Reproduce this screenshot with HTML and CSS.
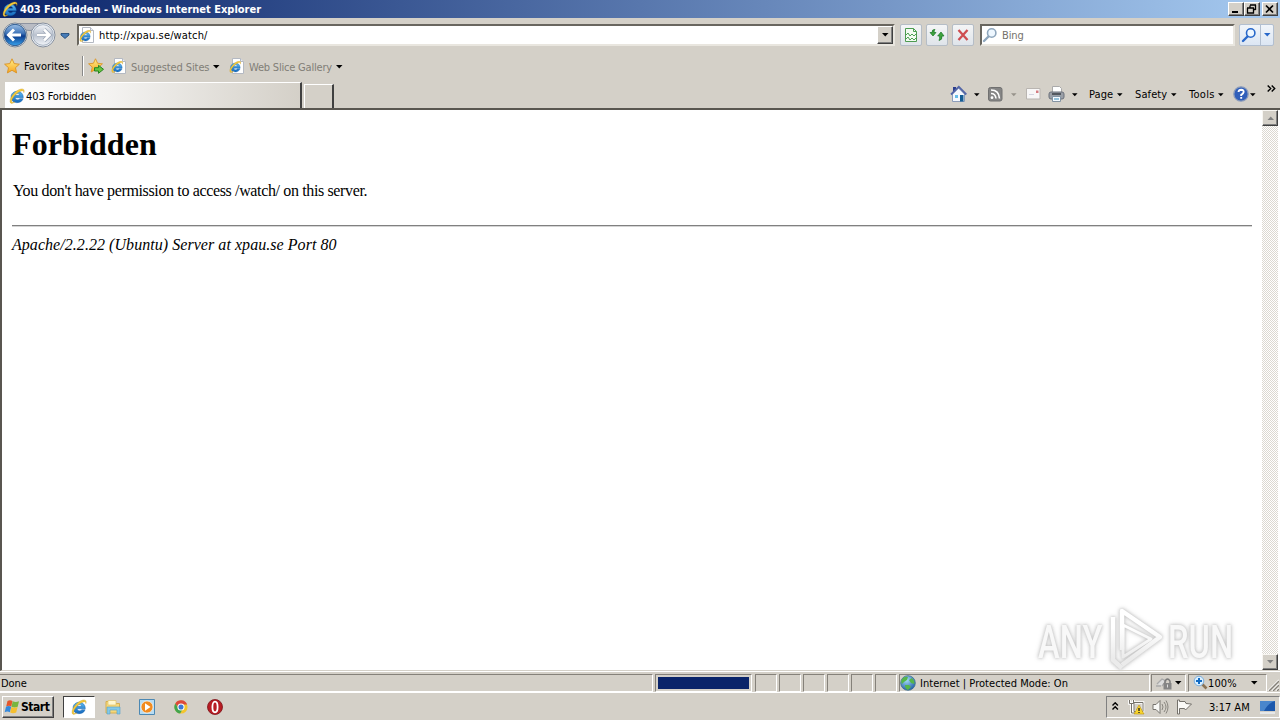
FILE: index.html
```html
<!DOCTYPE html>
<html lang="en">
<head>
<meta charset="utf-8">
<title>403 Forbidden - Windows Internet Explorer</title>
<link rel="stylesheet" href="styles.css">
</head>
<body>
<svg class="defs" width="0" height="0">
  <defs>
    <linearGradient id="blue" x1="0" y1="0" x2="0" y2="1"><stop offset="0" stop-color="#9cc0e6"/><stop offset=".42" stop-color="#3f74b8"/><stop offset=".55" stop-color="#0b3b8c"/><stop offset="1" stop-color="#3aa4ee"/></linearGradient>
    <linearGradient id="pale" x1="0" y1="0" x2="0" y2="1"><stop offset="0" stop-color="#f4f6fa"/><stop offset=".5" stop-color="#b9c1ce"/><stop offset="1" stop-color="#f2f5fa"/></linearGradient>
    <linearGradient id="gold" x1="0" y1="0" x2="0" y2="1"><stop offset="0" stop-color="#fff08a"/><stop offset="1" stop-color="#f8a51e"/></linearGradient>
    <radialGradient id="globe" cx=".4" cy=".3" r=".8"><stop offset="0" stop-color="#a5dcf8"/><stop offset="1" stop-color="#15539e"/></radialGradient>
    <linearGradient id="eblue" x1="0" y1="0" x2="0" y2="1"><stop offset="0" stop-color="#5cb8f0"/><stop offset="1" stop-color="#1468bd"/></linearGradient>
    <linearGradient id="mark" gradientUnits="userSpaceOnUse" x1="0" y1="20" x2="0" y2="50"><stop offset="0" stop-color="#fff"/><stop offset="1" stop-color="#ebebeb"/></linearGradient>
    <symbol id="ie" viewBox="0 0 16 16">
      <path d="M14.300 9.800H6.200c.2 2.300 3.600 2.700 4.500.9h3.400C12.600 16.200 2.200 16.300 2 9 2 1.500 14.600 1 14.300 9.800zM6.200 7.300h4.500c-.4-2.300-4.100-2.300-4.500 0z" fill="url(#eblue)" stroke="#0b58a5" stroke-width=".4"/>
      <path d="M1.600 15C-1 12 5.500 2.200 12 1c3-.5 3.700 1.300 2.800 3.700.1-2.100-1-2.500-3.200-1.400C6.500 5.300 2 11.500 2.800 14c.6.800 2 .2 3.200-.3C4.300 15.200 2.500 16 1.600 15z" fill="#f5ca3c" stroke="#b98c14" stroke-width=".3"/>
    </symbol>
    <symbol id="iepage" viewBox="0 0 16 16">
      <path d="M3.500.5h8l3 3v12h-11z" fill="#fff" stroke="#b4b9c2"/><path d="M11.500.5v3h3" fill="#e8edf5" stroke="#b4b9c2"/>
      <svg x="0" y="2.500" width="12.500" height="12.500"><use href="#ie"/></svg>
    </symbol>
    <symbol id="star" viewBox="0 0 16 16"><path d="M8 .8l2.200 4.800 5.200.6-3.900 3.500 1.100 5.200L8 12.300l-4.600 2.600 1.100-5.200L.6 6.200l5.200-.6z" fill="url(#gold)" stroke="#d99122" stroke-width=".9"/></symbol>
    <symbol id="down" viewBox="0 0 7 4"><path d="M0 0h6.500L3.250 3.500z" fill="currentColor"/></symbol>
    <symbol id="lens" viewBox="0 0 16 16"><path d="M6.500 9.500L2 14" stroke="currentColor" stroke-width="2.400" stroke-linecap="round"/><circle cx="9.700" cy="6" r="4.200" fill="#eef7ff" stroke="currentColor" stroke-width="1.600"/></symbol>
  </defs>
</svg>

<header class="titlebar">
  <svg class="i16"><use href="#ie"/></svg>
  <span class="title">403 Forbidden - Windows Internet Explorer</span>
  <div class="caption">
    <span class="cap"><svg width="12" height="10"><path d="M2 8h6" stroke="#000" stroke-width="2"/></svg></span>
    <span class="cap"><svg width="12" height="10"><path d="M4 1h6M4 1.500v2M9.500 1v5M7.500 5.500h2M1.500 4v5h6V4M1 4h7" fill="none" stroke="#000" stroke-width="1.300"/></svg></span>
    <span class="cap close"><svg width="12" height="10"><path d="M2 1.500l7 7M9 1.500l-7 7" stroke="#000" stroke-width="1.700"/></svg></span>
  </div>
</header>

<nav class="address-row">
  <svg class="travel" viewBox="0 0 56 28">
    <path d="M12 2.500h28v4q-12 6-28 0z" fill="#b9bcc4" stroke="#8d93a0"/>
    <circle cx="12" cy="14" r="12" fill="#e9edf3" stroke="#7b8797"/><circle cx="12" cy="14" r="10.700" fill="url(#blue)" stroke="#315d91"/>
    <path d="M6 14h12M11 8.500L5.500 14l5.500 5.500" fill="none" stroke="#fff" stroke-width="3"/>
    <circle cx="40" cy="14" r="12" fill="#edf1f6" stroke="#858e9d"/><circle cx="40" cy="14" r="10.300" fill="url(#pale)" stroke="#a8b3c2"/>
    <path d="M34 14h12M41 8.500l5.500 5.500-5.500 5.500" fill="none" stroke="#9aa5b5" stroke-width="4"/><path d="M34 14h12M41 8.500l5.500 5.500-5.500 5.500" fill="none" stroke="#fff" stroke-width="2.600"/>
  </svg>
  <svg class="recent" viewBox="0 0 10 6"><path d="M1 .5h8v1.500L5 5.500 1 2z" fill="#477cb7" stroke="#174172" stroke-width=".8"/></svg>
  <div class="field url">
    <svg class="i16"><use href="#iepage"/></svg>
    <span class="url-text">http://xpau.se/watch/</span>
    <span class="combo"><svg class="down"><use href="#down"/></svg></span>
  </div>
  <span class="tool"><svg width="16" height="16"><path d="M2.500 1.500h8l3 3v10h-11z" fill="#f3fbf2" stroke="#4d9b51"/><path d="M10.500 1.500v3h3M3 8l2-2 2 3 2-2 2 2 2-2M3 12l2-2 2 3 2-2 2 2 2-2" fill="none" stroke="#4ba152"/></svg></span>
  <span class="tool"><svg width="16" height="16"><path d="M6 2.500q-3-.5-3 3H1L4 9l3-3.500H5q0-2 1-3zM10 13.500q3.500-.5 3-4.500h2L12 5 8.700 9h2q0 3-.7 4.500z" fill="#3fa33e" stroke="#197525" stroke-width=".7"/></svg></span>
  <span class="tool"><svg width="16" height="16"><path d="M3.500 3l9 10M12.500 3l-9 10" stroke="#ce4c50" stroke-width="2.300"/></svg></span>
  <div class="field search"><svg class="i16"><use href="#lens"/></svg><span>Bing</span></div>
  <div class="go"><svg class="i16"><use href="#lens"/></svg><i></i><svg class="down"><use href="#down"/></svg></div>
</nav>

<nav class="favorites">
  <svg class="i16"><use href="#star"/></svg>
  <span class="fav-label">Favorites</span>
  <i class="divider"></i>
  <svg class="i16 add" viewBox="0 0 16 16"><use href="#star" width="15" height="15"/><path d="M6.500 9.700h4V7.300l5 4-5 4V13h-4z" fill="#67c442" stroke="#26851f"/></svg>
  <svg class="i16 page"><use href="#iepage"/></svg><span class="suggested">Suggested Sites</span><svg class="down"><use href="#down"/></svg>
  <svg class="i16 page slice"><use href="#iepage"/></svg><span class="gallery">Web Slice Gallery</span><svg class="down"><use href="#down"/></svg>
</nav>

<div class="tabs">
  <div class="tab"><svg class="i16"><use href="#ie"/></svg><span>403 Forbidden</span></div>
  <div class="newtab"></div>
  <div class="commands">
    <span class="slot home"><svg width="18" height="18"><path d="M3 2h3v5H3z" fill="#2b3d8d"/><path d="M2.500 9v7.500h12V9L8.500 3z" fill="#f5f9ff" stroke="#8c9dba"/><path d="M1 9.500L8.800 1.800 16.300 9.500" fill="none" stroke="#5366a7" stroke-width="1.800"/><path d="M5 10h3v3H5z" fill="#67bee9"/><path d="M10 10h3.500v6.500H10z" fill="#155d94"/></svg></span>
    <span class="slot arr1"><svg class="down"><use href="#down"/></svg></span>
    <span class="slot rss"><svg width="15" height="15"><rect x=".5" y=".5" width="13.500" height="13.500" rx="2" fill="#858585" stroke="#707070"/><path d="M3 3q8 0 8.500 8.500M3 6.500q4.500 0 5 5" fill="none" stroke="#fff" stroke-width="1.600"/><circle cx="4" cy="10.700" r="1.400" fill="#fff"/></svg></span>
    <span class="slot arr2"><svg class="down"><use href="#down"/></svg></span>
    <span class="slot mail"><svg width="15" height="12"><path d="M.5.500h13.500v10.500H.5z" fill="#f8f7f7" stroke="#b9b5b1"/><path d="M10 2.500h2.500V5H10z" fill="#d47b80"/><path d="M3 6.500h5" stroke="#d3d3df"/></svg></span>
    <span class="slot printer"><svg width="18" height="18"><path d="M4.500 1.500h7l2 2V8h-9z" fill="#fff" stroke="#aaa"/><rect x="1" y="7" width="15" height="7" rx="2" fill="#9a9fa7" stroke="#6b717b"/><path d="M4 9h9" stroke="#41464e" stroke-width="1.600"/><path d="M4.500 11.500h8v5h-8z" fill="#f4faff" stroke="#8393a2"/><path d="M6 14h5" stroke="#398bb9"/></svg></span>
    <span class="slot arr3"><svg class="down"><use href="#down"/></svg></span>
    <span class="slot label cpage">Page</span><span class="slot arr4"><svg class="down"><use href="#down"/></svg></span>
    <span class="slot label safety">Safety</span><span class="slot arr5"><svg class="down"><use href="#down"/></svg></span>
    <span class="slot label tools">Tools</span><span class="slot arr6"><svg class="down"><use href="#down"/></svg></span>
    <span class="slot help"><svg width="16" height="16"><circle cx="8" cy="8" r="7.200" fill="#305fba" stroke="#8c9cba" stroke-width="1.300"/><path d="M5.500 6q.3-2.300 2.700-2.300Q11 3.800 10.600 6.200 10.400 7.400 8.200 8.900v1M8.200 11v1.800" fill="none" stroke="#fff" stroke-width="1.900"/></svg></span>
    <span class="slot arr7"><svg class="down"><use href="#down"/></svg></span>
    <span class="more"><svg width="9" height="7"><path d="M.7.500l3 3-3 3M4.700.500l3 3-3 3" fill="none" stroke="#000" stroke-width="1.400"/></svg></span>
  </div>
</div>

<main class="view">
  <article>
    <h1>Forbidden</h1>
    <p>You don't have permission to access /watch/ on this server.</p>
    <hr>
    <address>Apache/2.2.22 (Ubuntu) Server at xpau.se Port 80</address>
  </article>
  <div class="scrollbar">
    <span class="sbtn up"><svg class="down"><use href="#down"/></svg></span>
    <span class="sbtn"><svg class="down"><use href="#down"/></svg></span>
  </div>
  <div class="watermark">
    <span>ANY</span>
    <svg class="play" width="58" height="64" viewBox="0 0 58 64"><g fill="none" stroke="url(#mark)" stroke-width="4.500" stroke-linejoin="round"><path d="M7 9v43l9 8"/><path d="M16 42V3l38 26-38 28"/><path d="M17 17l28 14-28 18z" stroke-width="3"/></g></svg>
    <span class="run">RUN</span>
  </div>
</main>

<footer class="status">
  <span class="pane done"><span>Done</span></span>
  <span class="pane progress"><i></i></span>
  <span class="pane cell"></span><span class="pane cell"></span><span class="pane cell"></span><span class="pane cell"></span><span class="pane cell"></span><span class="pane cell"></span>
  <span class="pane zone"><svg width="16" height="16"><circle cx="8" cy="8" r="7.300" fill="url(#globe)" stroke="#3c6d8e" stroke-width=".8"/><path d="M3 3q3-2 5-1l-1 3-3 2-2 2Q0 6 3 3zM9 5l3-2q3 3 2.500 6L11 8zM5 10l4 0 2 2-3 3Q5 14 5 10z" fill="#55b64a"/></svg><span>Internet | Protected Mode: On</span></span>
  <span class="pane lock"><svg width="20" height="16"><path d="M2 9l5-5 4 2-4 5M1 11h5" fill="#ddd" stroke="#aaa" stroke-width="1.300"/><path d="M10 8V6q2.500-4 5 0v2" fill="none" stroke="#777" stroke-width="1.400"/><rect x="8.500" y="8" width="8" height="6.500" fill="#858585"/><path d="M12.500 9.500v3" stroke="#ddd"/></svg><svg class="down"><use href="#down"/></svg></span>
  <span class="pane zoom"><svg width="16" height="16"><path d="M9 9l4.500 4.500" stroke="#8b7355" stroke-width="2.600"/><circle cx="6" cy="6" r="4.800" fill="#d9efff" stroke="#7daedc"/><path d="M6 3v6M3 6h6" stroke="#126bc4" stroke-width="2"/></svg><span>100%</span><svg class="down"><use href="#down"/></svg></span>
  <svg class="grip" width="12" height="12"><path d="M1 12L12 1M5 12l7-7M9 12l3-3" stroke="#fff" stroke-width="1.500"/><path d="M2 12L12 2M6 12l6-6M10 12l2-2" stroke="#858179" stroke-width="1.300"/></svg>
</footer>

<footer class="taskbar">
  <div class="start"><svg width="17" height="16" viewBox="0 0 17 16"><path d="M3.500 2q2.500-1.700 5 0L7.300 7.500Q5 5.800 2.200 7.500z" fill="#e4572c"/><path d="M8.700 2.300q2.800 1.600 6.300 0l-1.300 5.400q-3 1.400-6.200 0z" fill="#78b53f"/><path d="M2 7.800q2.500-1.500 5.200 0l-1.300 5.500q-2.600-1.500-5.200 0z" fill="#3489dc"/><path d="M7.400 8.100q3 1.500 6.200 0l-1.400 5.400q-3.200 1.500-6 0z" fill="#f5bf30"/></svg><b>Start</b></div>
  <div class="task active"><svg class="i16"><use href="#ie"/></svg></div>
  <div class="task"><svg width="16" height="16"><path d="M1 2.500h5l1 2h7.500V14H1z" fill="#f6d878" stroke="#d6af51"/><path d="M3 1.500h8V6H3z" fill="#fff7cf" stroke="#dfc36c" stroke-width=".7"/><path d="M2 8h13v7h-3v-4H5v4H2z" fill="#84c9e6" stroke="#559fc9" stroke-width=".6"/></svg></div>
  <div class="task"><svg width="16" height="16"><path d="M.5.500h15v15H.5z" fill="#b7dcf3" stroke="#4c88b3"/><circle cx="8" cy="8" r="6" fill="#f18b20" stroke="#fff" stroke-width=".6"/><path d="M6 4.300L11.500 8 6 11.700z" fill="#fff"/></svg></div>
  <div class="task"><svg width="14" height="14" viewBox="0 0 16 16"><circle cx="8" cy="8" r="7.500" fill="#f3c52d"/><path d="M1.500 4A7.500 7.500 0 0 1 15 5H8L5 9z" fill="#dd493c"/><path d="M1.500 4l4 6 4 1-2.500 4.500A7.500 7.500 0 0 1 1.500 4z" fill="#42a44e"/><circle cx="8" cy="8" r="3.500" fill="#3d78d8" stroke="#fff" stroke-width="1.200"/></svg></div>
  <div class="task"><svg width="16" height="16"><circle cx="8" cy="8" r="7.500" fill="#b81c23" stroke="#7b1118" stroke-width=".8"/><ellipse cx="8" cy="8" rx="2.600" ry="5.300" fill="#b81c23" stroke="#fff" stroke-width="1.800"/></svg></div>
  <div class="tray">
    <svg class="chev" width="7" height="9"><path d="M.5 3.500l2.700-2.700 2.700 2.700M.5 7.500l2.700-2.700 2.700 2.700" fill="none" stroke="#000" stroke-width="1.400"/></svg>
    <svg class="net" width="17" height="16"><path d="M1.500 1v3.500h4V1M3.500 4.500V14h5M5 3.500h10v9H5z" fill="none" stroke="#fff" stroke-width="2.600"/><path d="M1.500 1v3.500h4V1M3.500 4.500V14h5M6 3.500h9v9H6z" fill="none" stroke="#74716b"/><path d="M11 6l5 9H6z" fill="#f8d42c" stroke="#b99111" stroke-width=".6"/><path d="M11 9v3M11 13v1" stroke="#222" stroke-width="1.400"/></svg>
    <svg class="vol" width="17" height="16"><path d="M1 5.500h3l4-4v13l-4-4H1z" fill="#f8f8f6" stroke="#77746f"/><path d="M10 5q2 3 0 6M12 3q4 5 0 10M14 1.500q4 6.500 0 13" fill="none" stroke="#89867f"/></svg>
    <svg class="flag" width="17" height="16"><path d="M1.500 1v14h2V9.500h5l1 1.500 6-6-5.500-.5-1-2H3.500V1z" fill="#faf9f6" stroke="#74716b"/></svg>
    <span class="clock">3:17 AM</span>
    <svg class="desk" width="16" height="14"><path d="M0 1h15v10H0z" fill="#1c58ac"/><path d="M0 1h15Q8 3 4 11H0z" fill="#4a86cc"/><path d="M0 13h15" stroke="#ecf1f5" stroke-width="1.500"/></svg>
  </div>
</footer>
</body>
</html>
```
FILE: styles.css
```css
* { box-sizing: border-box; }
body { margin: 0; width: 1280px; height: 720px; overflow: hidden; display: flex; flex-direction: column; background: #d4d0c8; color: #000; font: 11px/14px "DejaVu Sans Condensed", "DejaVu Sans", sans-serif; letter-spacing: -.1px; white-space: nowrap; }
svg { flex: none; display: block; }
.defs { position: absolute; }
.i16 { width: 16px; height: 16px; }
.down { width: 7px; height: 4px; }

.titlebar { flex: none; height: 18px; padding-left: 2px; display: flex; align-items: center; background: linear-gradient(90deg, #0a246a, #a6caf0); }
.title { margin-left: 2px; padding-top: 1px; color: #fff; font-weight: bold; letter-spacing: 0; }
.caption { margin-left: auto; display: flex; padding-right: 2px; }
.cap { width: 16px; height: 14px; padding: 1px; background: #d4d0c8; border: 1px solid; border-color: #fff #404040 #404040 #fff; box-shadow: inset -1px -1px #808080; }
.close { margin-left: 2px; }

.address-row { flex: none; height: 34px; display: flex; align-items: center; padding-left: 3px; }
.travel { width: 56px; height: 28px; overflow: visible; }
.recent { width: 10px; height: 6px; margin: 2px 7px 0 1px; }
.field { height: 22px; flex: none; display: flex; align-items: center; background: #fff; border: 2px solid; border-color: #69665f #e9e6df #e9e6df #69665f; }
.url { width: 818px; }
.url-text { margin-left: 4px; padding-top: 2px; letter-spacing: .14px; }
.combo { margin-left: auto; width: 16px; height: 18px; display: grid; place-items: center; background: #d4d0c8; border: 1px solid; border-color: #fff #404040 #404040 #fff; box-shadow: inset -1px -1px #808080; }
.tool { flex: none; width: 22px; height: 22px; margin-left: 4px; padding: 2px; border: 1px solid #b5bdc6; border-radius: 2px; background: linear-gradient(#f4f5f6, #dfe4ea); }
.url + .tool { margin-left: 5px; }
.search { width: 255px; margin-left: 6px; color: #74716b; }
.search svg { color: #8fa7bd; }
.search span { margin-left: 4px; padding-top: 2px; }
.go { width: 35px; height: 22px; margin-left: 4px; display: flex; align-items: center; border: 1px solid #b2bfd0; border-radius: 2px; background: linear-gradient(#f1f5fa, #dce6f3); color: #2868ca; padding-left: 1px; }
.go i { width: 1px; height: 20px; margin: 0 3px; background: #b2bfd0; }

.favorites { flex: none; height: 28px; display: flex; align-items: center; padding-left: 4px; }
.fav-label { width: 58px; padding: 1px 0 0 4px; letter-spacing: .1px; }
.divider { width: 2px; height: 20px; margin: 0 4px; background: #888; border-right: 1px solid #fff; }
.page { margin-left: 7px; }
.suggested { width: 86px; padding: 3px 0 0 4px; color: #817e77; }
.gallery { width: 91px; padding: 3px 0 0 4px; color: #817e77; letter-spacing: -.2px; }
.slice { margin-left: 9px; }
.favorites .down { margin-top: 2px; }

.tabs { flex: none; height: 28px; display: flex; align-items: flex-end; padding-left: 5px; }
.tab { width: 297px; height: 26px; padding-left: 3px; display: flex; align-items: center; background: linear-gradient(90deg, #fff, #f4f3f1 35%, #d4d0c8); border: solid; border-width: 1px 2px 0 1px; border-color: #fff #404040 #fff #fff; }
.tab span { margin-left: 1px; padding-top: 2px; }
.newtab { width: 30px; height: 24px; margin-left: 2px; border: solid; border-width: 1px 2px 0 1px; border-color: #fff #404040 #fff #fff; }
.commands { height: 28px; margin-left: 616px; display: flex; align-items: center; flex: none; }
.slot { flex: none; }
.label { padding-top: 1px; }
.home { width: 24px; } .arr1 { width: 14px; } .rss { width: 23px; } .arr2 { width: 15px; color: #97938b; } .mail { width: 22px; } .printer { width: 24px; } .arr3 { width: 17px; }
.cpage { width: 28px; letter-spacing: .1px; } .arr4 { width: 18px; } .safety { width: 36px; letter-spacing: .1px; } .arr5 { width: 18px; } .tools { width: 29px; letter-spacing: .3px; } .arr6 { width: 15px; } .help { width: 17px; } .arr7 { width: 17px; }
.commands .down { width: 6px; margin-top: 1px; }
.more { margin-top: -12px; }

.view { flex: none; height: 563px; position: relative; display: flex; background: #fff; border-top: 2px solid #595650; border-left: 2px solid #595650; border-bottom: 1px solid #d4d0c8; }
article { width: 1260px; padding: 15px 10px 0; font-family: "Liberation Serif", serif; font-size: 16px; line-height: 20px; letter-spacing: -.36px; }
h1 { margin: 0; font-size: 32px; line-height: 38px; letter-spacing: .1px; }
p { margin: 18px 0 24px 1px; }
hr { margin: 0; border: 0; height: 2px; background: #808080; border-bottom: 1px solid #d5d5d5; }
address { margin-top: 8px; letter-spacing: .05px; }
.scrollbar { width: 16px; display: flex; flex-direction: column; justify-content: space-between; background: repeating-conic-gradient(#fff 0 25%, #dcd8d1 0 50%) 0 0 / 2px 2px; }
.sbtn { width: 16px; height: 16px; display: grid; place-items: center; color: #808080; background: #d4d0c8; border: 1px solid; border-color: #f8f6f2 #404040 #404040 #f8f6f2; box-shadow: inset -1px -1px #808080; }
.up svg { transform: rotate(180deg); }
.watermark { position: absolute; left: 1036px; top: 498px; width: 196px; height: 64px; display: flex; align-items: center; justify-content: space-between; font: 500 46px/50px Roboto, sans-serif; letter-spacing: 0; color: #fff; filter: drop-shadow(0 0 1.5px #c4c4c4) drop-shadow(0 0 2px #d4d4d4); }
.watermark span { width: 66px; margin-top: 4px; transform: scaleX(.71); transform-origin: left; color: #f8f8f8; }
.play { overflow: visible; margin-right: 2px; }

.status { flex: none; height: 22px; display: flex; align-items: center; border-top: 1px solid #fff; border-bottom: 1px solid #fff; padding-top: 1px; }
.pane { flex: none; height: 18px; display: flex; align-items: center; border: 1px solid; border-color: #85817a #fff #fff #85817a; }
.pane span { padding-top: 2px; }
.done { width: 653px; border-left: 0; padding-left: 1px; }
.progress { width: 97px; margin: 0 2px; padding: 2px; }
.progress i { width: 92px; height: 12px; background: #0a246a; }
.cell { width: 22px; margin: 0 1px; }
.zone { width: 251px; margin-left: 1px; letter-spacing: .04px; }
.zone span { margin-left: 4px; }
.lock { width: 35px; margin-left: 1px; padding-left: 3px; }
.zoom { width: 79px; margin-left: 2px; padding-left: 4px; letter-spacing: .1px; }
.zoom span { width: 43px; margin-left: -1px; }
.grip { margin-top: 5px; }

.taskbar { flex: none; height: 27px; display: flex; align-items: center; padding-left: 2px; }
.start { width: 52px; height: 22px; margin-right: 9px; padding-left: 1px; display: flex; align-items: center; border: 1px solid; border-color: #fff #404040 #404040 #fff; box-shadow: inset -1px -1px #808080; }
.start b { font-size: 12px; letter-spacing: -.45px; }
.task { width: 34px; height: 22px; display: grid; place-items: center; flex: none; }
.active { width: 32px; margin-right: 1px; background: #fff; border: 1px solid; border-color: #404040 #fff #fff #404040; }
.tray { width: 174px; height: 22px; margin-left: auto; display: flex; align-items: center; border: 1px solid; border-color: #808080 #fff #fff #808080; }
.chev { margin: 0 9px 0 5px; }
.vol { margin-left: 7px; }
.flag { margin-left: 7px; }
.clock { flex: none; width: 51px; margin-left: 16px; padding-top: 2px; letter-spacing: 0; }
```
